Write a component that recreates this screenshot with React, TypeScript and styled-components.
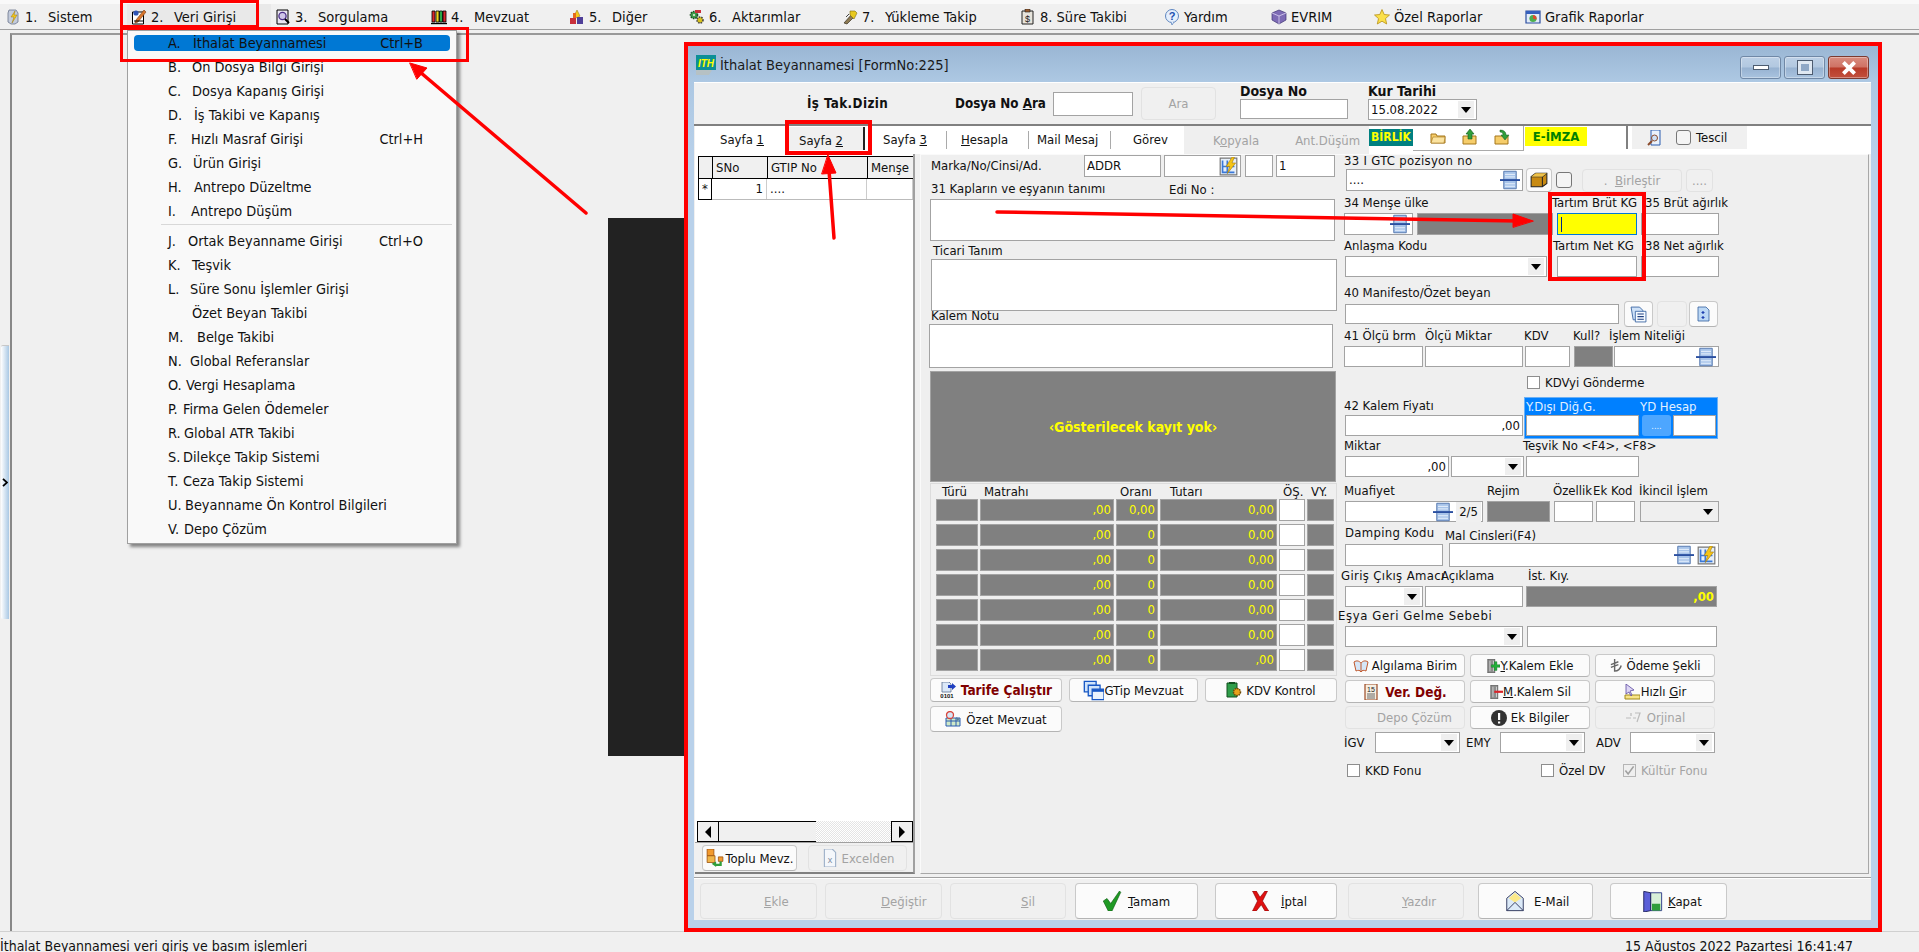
import React from 'react';
import styled, { createGlobalStyle } from 'styled-components';

const GlobalStyle = createGlobalStyle`
  html, body { margin: 0; padding: 0; background: #f0f0f0; }
  body {
    font-family: "DejaVu Sans Condensed", "DejaVu Sans", "Liberation Sans", sans-serif;
    font-size: 13px;
    color: #111;
  }
  u { text-underline-offset: 1px; }
`;

const Page = styled.div`
  position: relative;
  width: 1919px;
  height: 952px;
  overflow: hidden;
  display: flex;
  flex-direction: column;
  background: #f0f0f0;
`;

const TopStrip = styled.div`
  height: 4px;
  background: #f9f9f9;
`;

const MenuBar = styled.div`
  height: 25px;
  display: flex;
  padding-left: 1px;
  background: #f0f0f0;
  border-bottom: 1px solid #a0a0a0;
  margin-bottom: 3px;
  flex: none;
`;

const MenuEntry = styled.div<{ $w: number; $on?: boolean }>`
  width: ${p => p.$w}px;
  flex: none;
  box-sizing: border-box;
  padding-left: 4px;
  display: flex;
  align-items: center;
  gap: 4px;
  font-size: 14.5px;
  white-space: nowrap;
  background: ${p => (p.$on ? '#e9e9e9' : 'transparent')};
`;

const MenuNum = styled.span`
  width: 19px;
  flex: none;
`;

const Desktop = styled.div`
  flex: 1;
  display: flex;
  min-height: 0;
`;

const Handle = styled.div`
  width: 10px;
  flex: none;
  display: flex;
  align-items: center;
`;

const HandleBar = styled.div`
  width: 8px;
  height: 273px;
  margin-left: 1px;
  border-radius: 2px 0 0 2px;
  background: linear-gradient(90deg, #ffffff, #a9c8e4);
  border-top: 1px solid #c8c8c8;
  display: flex;
  align-items: center;
  justify-content: center;
`;

const Mdi = styled.div`
  flex: 1;
  position: relative;
  border-top: 2px solid #999;
  border-left: 2px solid #888;
  background: #f0f0f0;
`;

const DarkPane = styled.div`
  position: absolute;
  left: 596px;
  top: 183px;
  width: 84px;
  height: 538px;
  background: #222;
`;

const StatusBar = styled.div`
  height: 14px;
  flex: none;
  border-top: 1px solid #d0d0d0;
  display: flex;
  justify-content: space-between;
  padding: 6px 66px 0 0;
  font-size: 14px;
  line-height: 16px;
  white-space: nowrap;
`;

const Dropdown = styled.div`
  position: absolute;
  left: 127px;
  top: 30px;
  width: 328px;
  height: 512px;
  border: 1px solid #a0a0a0;
  background: #f9f9f9;
  box-shadow: 3px 3px 3px rgba(0, 0, 0, 0.45);
  font-size: 14.4px;
  z-index: 3;
`;

const DropItem = styled.div<{ $on?: boolean }>`
  position: relative;
  z-index: 0;
  height: 24px;
  margin: 0 6px;
  padding-left: 34px;
  display: flex;
  align-items: center;
  white-space: nowrap;
  ${p =>
    p.$on &&
    `&::before {
      content: '';
      position: absolute;
      inset: 4px 0;
      border-radius: 4px;
      background: #0078d4;
      z-index: -1;
    }`}
`;

const DropKey = styled.span<{ $w: number }>`
  width: ${p => p.$w}px;
  flex: none;
`;

const DropShortcut = styled.span`
  margin-left: auto;
  margin-right: 27px;
`;

const DropSep = styled.div`
  height: 1px;
  margin: 1px 4px 4px 33px;
  background: #d8d8d8;
`;

const Window = styled.div`
  position: absolute;
  left: 676px;
  top: 11px;
  width: 1190px;
  height: 882px;
  box-sizing: border-box;
  padding: 0 7px 8px 6px;
  display: flex;
  flex-direction: column;
  background: linear-gradient(#9ab6d4, #adc8e3 36px, #b9d1ea 120px);
  z-index: 1;
`;

const TitleBar = styled.div`
  height: 37px;
  flex: none;
  display: flex;
  align-items: center;
  gap: 4px;
  padding-left: 2px;
  font-size: 14.5px;
  color: #1a1a1a;
`;

const WinButtons = styled.div`
  margin-left: auto;
  margin-right: 2px;
  display: flex;
  gap: 3px;
  align-self: flex-start;
  padding-top: 10px;
`;

const WinButton = styled.div<{ $close?: boolean }>`
  width: 41px;
  height: 23px;
  box-sizing: border-box;
  border: 1px solid ${p => (p.$close ? '#7c3a30' : '#7088a6')};
  border-radius: 3px;
  display: flex;
  align-items: center;
  justify-content: center;
  background: ${p =>
    p.$close
      ? 'linear-gradient(#d98d80 0, #cf7264 48%, #b83a28 52%, #c2503d 100%)'
      : 'linear-gradient(#bdd0e6 0, #b2c8e0 48%, #97b2d1 52%, #a9c3df 100%)'};
  box-shadow: inset 0 0 0 1px rgba(255, 255, 255, 0.35);
`;

const MinGlyph = styled.div`
  width: 16px;
  height: 5px;
  background: #fff;
  border: 1px solid #4d5c70;
  box-sizing: border-box;
`;

const MaxGlyph = styled.div`
  width: 14px;
  height: 13px;
  box-sizing: border-box;
  background: #8fa8c6;
  border: 3px solid #dfe8f2;
  outline: 1px solid #4d5c70;
`;

const Content = styled.div`
  flex: 1;
  display: flex;
  flex-direction: column;
  background: #f0f0f0;
  min-height: 0;
`;

const HeaderStrip = styled.div`
  height: 41px;
  flex: none;
  display: flex;
  align-items: center;
  border-top: 1px solid #fff;
  border-bottom: 2px solid #808080;
  box-sizing: content-box;
  margin-top: -1px;
`;

const HeadLabel = styled.div<{ $ml?: number; $w: number; $ls?: number }>`
  flex: none;
  width: ${p => p.$w}px;
  margin-left: ${p => p.$ml ?? 0}px;
  letter-spacing: ${p => p.$ls ?? 0}px;
  font-weight: bold;
  font-size: 13.3px;
  white-space: nowrap;
`;

const HeadGroup = styled.div<{ $w: number; $ml?: number }>`
  flex: none;
  width: ${p => p.$w}px;
  margin-left: ${p => p.$ml ?? 0}px;
  align-self: flex-start;
  padding-top: 1px;
  display: flex;
  flex-direction: column;
  line-height: 14px;
  gap: 1px;
  b { font-size: 14px; }
`;

const TabStrip = styled.div`
  height: 28px;
  flex: none;
  display: flex;
  align-items: flex-start;
  margin-left: 1px;
  background: #fff;
`;

const Tab = styled.div<{ $w: number; $pl: number; $on?: boolean; $sep?: boolean }>`
  flex: none;
  width: ${p => p.$w}px;
  height: ${p => (p.$on ? 23 : 18)}px;
  margin-top: ${p => (p.$on ? 1 : 5)}px;
  box-sizing: border-box;
  padding-left: ${p => p.$pl}px;
  line-height: ${p => (p.$on ? 28 : 18)}px;
  white-space: nowrap;
  background: ${p => (p.$on ? '#f0f0f0' : 'transparent')};
  border-right: ${p => (p.$on ? '2px solid #222' : p.$sep ? '1px solid #aaa' : 'none')};
`;

const ToolBlock = styled.div`
  flex: none;
  width: 185px;
  height: 28px;
  display: flex;
  align-items: center;
  padding-left: 29px;
  box-sizing: border-box;
  gap: 36px;
  background: #efefef;
  color: #a3a3a3;
  white-space: nowrap;
`;

const Birlik = styled.div`
  flex: none;
  width: 44px;
  height: 17px;
  margin-top: 3px;
  background: #008080;
  color: #ffff00;
  font-weight: bold;
  font-size: 12px;
  line-height: 17px;
  text-align: center;
`;

const IconTray = styled.div`
  flex: none;
  width: 111px;
  height: 25px;
  box-sizing: border-box;
  border-bottom: 1px solid #aaa;
  border-right: 1px solid #aaa;
  padding: 3px 0 0 17px;
  display: flex;
  align-items: flex-start;
  gap: 16px;
`;

const EImza = styled.div`
  flex: none;
  width: 62px;
  height: 19px;
  margin: 1px 0 0 1px;
  background: #ffff00;
  color: #008000;
  font-weight: bold;
  font-size: 13px;
  line-height: 19px;
  text-align: center;
`;

const TesciBlock = styled.div`
  flex: none;
  margin-left: 39px;
  width: 121px;
  height: 23px;
  box-sizing: border-box;
  border-left: 2px solid #808080;
  background: linear-gradient(90deg, #fff 4px, #f0f0f0 4px);
  display: flex;
  align-items: center;
  padding-left: 19px;
`;

const MainArea = styled.div`
  height: 720px;
  flex: none;
  display: flex;
  margin-left: 1px;
`;

const LeftPanel = styled.div`
  width: 220px;
  flex: none;
  box-sizing: border-box;
  border-right: 2px solid #a0a0a0;
  border-bottom: 2px solid #808080;
  padding-top: 2px;
  background: #fff;
  display: flex;
  flex-direction: column;
`;

const GridHead = styled.div`
  margin-left: 3px;
  display: grid;
  grid-template-columns: 14px 55px 100px 46px;
  height: 23px;
  box-sizing: border-box;
  background: #f0f0f0;
  border-top: 1px solid #000;
  border-bottom: 1px solid #000;
`;

const GridHeadCell = styled.div`
  border-left: 1px solid #000;
  padding-left: 3px;
  line-height: 21px;
  overflow: hidden;
  white-space: nowrap;
`;

const GridRow = styled.div`
  margin-left: 3px;
  display: grid;
  grid-template-columns: 14px 55px 100px 46px;
  height: 21px;
  box-sizing: border-box;
  border-bottom: 1px solid #bbb;
  line-height: 20px;
`;

const GridMark = styled.div`
  border: 1px solid #000;
  border-top: none;
  margin-bottom: -1px;
  text-align: center;
`;

const GridCell = styled.div<{ $right?: boolean }>`
  border-right: 1px solid #ccc;
  padding: 0 3px;
  text-align: ${p => (p.$right ? 'right' : 'left')};
`;

const GridFill = styled.div`
  flex: 1;
`;

const HScroll = styled.div`
  height: 21px;
  flex: none;
  margin-left: 2px;
  display: flex;
  background: repeating-conic-gradient(#e4e4e4 0 25%, #fff 0 50%) 0 0 / 2px 2px;
`;

const ScrollBtn = styled.div`
  width: 22px;
  flex: none;
  box-sizing: border-box;
  border: 1px solid #000;
  background: #f0f0f0;
  display: flex;
  align-items: center;
  justify-content: center;
`;

const ScrollThumb = styled.div`
  width: 97px;
  flex: none;
  box-sizing: border-box;
  background: #f0f0f0;
  border-top: 1px solid #000;
  border-bottom: 1px solid #000;
`;

const ScrollSpace = styled.div`
  flex: 1;
`;

const LeftFooter = styled.div`
  height: 30px;
  flex: none;
  box-sizing: border-box;
  border-top: 1px solid #a0a0a0;
  background: #f0f0f0;
  padding: 2px 0 0 7px;
  display: flex;
  gap: 11px;
`;

const Form = styled.div`
  flex: 1;
  margin-left: 5px;
  margin-right: 2px;
  box-sizing: border-box;
  border: 1px solid;
  border-color: #fafafa #a8a8a8 #a8a8a8 #fafafa;
  padding-left: 8px;
  display: flex;
  background: #efefef;
`;

const FormLeft = styled.div`
  width: 409px;
  flex: none;
  display: flex;
  flex-direction: column;
`;

const FormRight = styled.div`
  flex: 1;
  padding-left: 6px;
  display: flex;
  flex-direction: column;
`;

const FieldRow = styled.div<{ $h: number; $mt?: number }>`
  height: ${p => p.$h}px;
  margin-top: ${p => p.$mt ?? 0}px;
  flex: none;
  display: flex;
  align-items: center;
`;

const LabelRow = styled.div<{ $h: number; $pb?: number }>`
  height: ${p => p.$h}px;
  flex: none;
  box-sizing: border-box;
  padding-bottom: ${p => p.$pb ?? 2}px;
  display: flex;
  align-items: flex-end;
`;

const FieldLabel = styled.span<{ $w?: number; $ml?: number; $lift?: number; $ls?: number }>`
  flex: none;
  ${p => (p.$w ? `width: ${p.$w}px;` : '')}
  margin-left: ${p => p.$ml ?? 0}px;
  margin-bottom: ${p => p.$lift ?? 0}px;
  letter-spacing: ${p => p.$ls ?? 0}px;
  line-height: 16px;
  white-space: nowrap;
`;

const Field = styled.div<{
  $w: number;
  $h?: number;
  $ml?: number;
  $tone?: 'grey' | 'yellow' | 'off';
  $right?: boolean;
}>`
  flex: none;
  width: ${p => p.$w}px;
  height: ${p => p.$h ?? 22}px;
  margin-left: ${p => p.$ml ?? 0}px;
  box-sizing: border-box;
  border: 1px solid ${p => (p.$tone === 'yellow' ? '#0078d7' : '#a3a3a3')};
  background: ${p =>
    p.$tone === 'grey' ? '#808080' : p.$tone === 'yellow' ? '#ffff00' : p.$tone === 'off' ? '#efefef' : '#fff'};
  color: ${p => (p.$tone === 'grey' ? '#ffff00' : '#111')};
  display: flex;
  align-items: center;
  justify-content: ${p => (p.$right ? 'flex-end' : 'flex-start')};
  padding: 0 2px;
  line-height: 16px;
  white-space: nowrap;
`;

const Caret = styled.span`
  margin-left: auto;
  width: 16px;
  height: calc(100% - 2px);
  flex: none;
  background: #efefef;
  display: flex;
  align-items: center;
  justify-content: center;
  &::after {
    content: '';
    border-left: 5px solid transparent;
    border-right: 5px solid transparent;
    border-top: 6px solid #000;
  }
`;

const FieldTools = styled.span`
  margin-left: auto;
  display: flex;
  align-items: center;
  gap: 3px;
`;

const PageCount = styled.span`
  background: #f0f0f0;
  padding: 2px 3px;
  margin-right: -1px;
`;

const Caretline = styled.span`
  width: 1px;
  height: 15px;
  margin-left: 1px;
  background: #00288c;
`;

const GreyBox = styled.div`
  width: 406px;
  height: 111px;
  margin: 3px 0 0 1px;
  flex: none;
  box-sizing: border-box;
  background: #808080;
  border: 1px solid #a3a3a3;
  color: #ffff00;
  font-weight: bold;
  font-size: 14px;
  display: flex;
  align-items: center;
  justify-content: center;
`;

const TaxPanel = styled.div`
  width: 407px;
  height: 193px;
  margin: 1px 0 0 1px;
  flex: none;
  box-sizing: border-box;
  border: 1px solid #dcdcdc;
  padding-left: 5px;
`;

const TaxGrid = styled.div`
  display: grid;
  grid-template-columns: 42px 134px 42px 117px 26px 27px;
  column-gap: 2px;
  grid-auto-rows: 22px;
  row-gap: 3px;
`;

const TaxHead = styled(TaxGrid)`
  grid-auto-rows: 15px;
  line-height: 15px;
`;

const TaxHeadCell = styled.span<{ $pl: number }>`
  padding-left: ${p => p.$pl}px;
  white-space: nowrap;
`;

const TaxCell = styled.div<{ $white?: boolean }>`
  box-sizing: border-box;
  border: 1px solid #a3a3a3;
  background: ${p => (p.$white ? '#fff' : '#808080')};
  color: #ffff00;
  text-align: right;
  padding-right: 2px;
  line-height: 20px;
`;

const Btn = styled.div<{ $w?: number; $h?: number; $ml?: number; $off?: boolean; $pl?: number; $gap?: number }>`
  flex: none;
  ${p => (p.$w ? `width: ${p.$w}px;` : '')}
  height: ${p => p.$h ?? 23}px;
  margin-left: ${p => p.$ml ?? 0}px;
  box-sizing: border-box;
  border: 1px solid ${p => (p.$off ? '#e2e2e2' : '#c9c9c9')};
  border-bottom-color: ${p => (p.$off ? '#e2e2e2' : '#b4b4b4')};
  border-radius: 4px;
  background: ${p => (p.$off ? '#f0f0f0' : '#fbfbfb')};
  color: ${p => (p.$off ? '#a3a3a3' : '#111')};
  display: flex;
  align-items: center;
  justify-content: ${p => (p.$pl != null ? 'flex-start' : 'center')};
  padding-left: ${p => p.$pl ?? 0}px;
  gap: ${p => p.$gap ?? 3}px;
  white-space: nowrap;
`;

const Maroon = styled.b`
  color: #800000;
  font-size: 13.5px;
`;

const ButtonGrid = styled.div`
  margin: 7px 0 0 1px;
  display: grid;
  grid-template-columns: repeat(3, 120px);
  grid-auto-rows: 23px;
  gap: 3px 5px;
`;

const BluePanel = styled.div`
  width: 194px;
  height: 42px;
  margin-left: 1px;
  flex: none;
  box-sizing: border-box;
  background: #0080ff;
  color: #e2f0ff;
  border: 1px solid #6bb0f5;
  padding-left: 1px;
`;

const BlueLabels = styled.div`
  height: 17px;
  display: grid;
  grid-template-columns: 114px auto;
  line-height: 18px;
  white-space: nowrap;
`;

const BlueFields = styled.div`
  display: flex;
  align-items: center;
`;

const BlueBtn = styled.div`
  flex: none;
  width: 29px;
  height: 21px;
  margin: 0 2px 0 3px;
  border-radius: 3px;
  background: #4da6ff;
  color: #e8f3ff;
  font-size: 9px;
  display: flex;
  align-items: center;
  justify-content: center;
`;

const Split = styled.div`
  height: 42px;
  flex: none;
  display: flex;
`;

const SplitLeft = styled.div`
  width: 179px;
  flex: none;
  display: flex;
  flex-direction: column;
`;

const CheckGroup = styled.div<{ $w?: number; $ml?: number; $off?: boolean }>`
  flex: none;
  ${p => (p.$w ? `width: ${p.$w}px;` : '')}
  margin-left: ${p => p.$ml ?? 0}px;
  display: flex;
  align-items: center;
  gap: 5px;
  color: ${p => (p.$off ? '#a3a3a3' : '#111')};
  white-space: nowrap;
`;

const CheckBox = styled.span<{ $off?: boolean }>`
  width: 13px;
  height: 13px;
  flex: none;
  box-sizing: border-box;
  border: 1px solid ${p => (p.$off ? '#b5b5b5' : '#8d8d8d')};
  background: ${p => (p.$off ? '#efefef' : '#fff')};
  display: flex;
  align-items: center;
  justify-content: center;
`;

const RoundCheck = styled.span<{ $w: number; $ml?: number }>`
  flex: none;
  width: ${p => p.$w}px;
  height: ${p => p.$w}px;
  margin-left: ${p => p.$ml ?? 0}px;
  box-sizing: border-box;
  border: 1px solid #777;
  border-radius: 3px;
  background: #f4f4f4;
`;

const BottomSep = styled.div`
  height: 2px;
  flex: none;
  margin-top: 3px;
  border-top: 1px solid #a0a0a0;
  border-bottom: 1px solid #fff;
  box-sizing: border-box;
`;

const BottomBar = styled.div`
  flex: none;
  height: 36px;
  margin-top: 4px;
  display: flex;
`;

const Overlay = styled.svg`
  position: absolute;
  left: 0;
  top: 0;
  z-index: 5;
  pointer-events: none;
`;

const Svg = styled.svg`
  flex: none;
  display: block;
`;

const Ico: React.FC<{ s?: number; children: React.ReactNode }> = ({ s = 16, children }) => (
  <Svg width={s} height={s} viewBox="0 0 16 16">
    {children}
  </Svg>
);

const SistemIcon = () => (
  <Ico>
    <path d="M4 1h7l2 3v9l-3 2H6l-3-2V4z" fill="#c3cbdb" stroke="#69748c" strokeWidth=".8" />
    <path d="M10 2 6 8h3l-2 6 5-8H9z" fill="#f3c81c" stroke="#9c7a10" strokeWidth=".5" />
  </Ico>
);
const PencilDocIcon = () => (
  <Ico>
    <path d="M1.5 3h11v12h-11z" fill="#fff" stroke="#000" />
    <path d="M5 11 13 1l2 2-8 10-3 1z" fill="#d8762c" stroke="#7a3a10" strokeWidth=".6" />
    <circle cx="5" cy="4" r="2.6" fill="#2f55b5" />
    <path d="M3 12h9" stroke="#000" />
  </Ico>
);
const MagnifierDocIcon = () => (
  <Ico>
    <path d="M2 1h11v14H2z" fill="#eae6f2" stroke="#000" />
    <circle cx="7.5" cy="7" r="3.6" fill="#cfc6e8" stroke="#4b2f8a" strokeWidth="1.3" />
    <path d="m10 10 4 4" stroke="#000" strokeWidth="2" />
  </Ico>
);
const BooksIcon = () => (
  <Ico>
    <path d="M1 2h3v11H1z" fill="#d9262c" stroke="#000" strokeWidth=".8" />
    <path d="M5 2h3v11H5z" fill="#f2d51c" stroke="#000" strokeWidth=".8" />
    <path d="M8.5 2h3v11h-3z" fill="#29a84a" stroke="#000" strokeWidth=".8" />
    <path d="M12 2h3v11h-3z" fill="#d9262c" stroke="#000" strokeWidth=".8" />
    <path d="M0 14.5h16" stroke="#000" strokeWidth="1.4" />
  </Ico>
);
const PeopleIcon = () => (
  <Ico>
    <path d="M8 1 11 7 8 9 5 7z" fill="#f4c91a" stroke="#8a6a0c" strokeWidth=".5" />
    <path d="M1 9h6v6H1z" fill="#c8303b" />
    <path d="M8 8h6v7H8z" fill="#4f3f98" />
    <path d="M4 4h3v5H4z" fill="#e56a1d" />
  </Ico>
);
const GearsIcon = () => (
  <Ico>
    <circle cx="5" cy="6" r="3.5" fill="#3f9e4a" stroke="#1f4f25" strokeDasharray="1.5 1" strokeWidth="1.6" />
    <circle cx="11" cy="11" r="3" fill="#d8c21c" stroke="#444" strokeDasharray="1.5 1" strokeWidth="1.6" />
    <path d="M6 1h6v3H6z" fill="#c8303b" />
    <circle cx="5" cy="6" r="1" fill="#eee" />
  </Ico>
);
const WandIcon = () => (
  <Ico>
    <path d="m2 14 8-9 3 2-8 8z" fill="#8d7a52" stroke="#3a3222" strokeWidth=".7" />
    <path d="M8 2h5l2 2-3 6-4-4z" fill="#e8c91e" stroke="#7a6a10" strokeWidth=".6" />
    <path d="m4 8 3-3" stroke="#444" strokeWidth="1" />
  </Ico>
);
const ClipboardIcon = () => (
  <Ico>
    <path d="M2 2h11v13H2z" fill="#e7e4dc" stroke="#222" />
    <path d="M5 0h5v3H5z" fill="#9a5c2e" stroke="#222" strokeWidth=".6" />
    <text x="7.5" y="12.5" fontSize="9" textAnchor="middle" fill="#222" fontFamily="Liberation Sans">$</text>
  </Ico>
);
const QuestionIcon = () => (
  <Ico>
    <circle cx="8" cy="7" r="6.5" fill="#e5effc" stroke="#5e86c0" />
    <path d="m7 13 1 3 2-3" fill="#e5effc" stroke="#5e86c0" strokeWidth=".8" />
    <text x="8" y="11" fontSize="11" fontWeight="bold" textAnchor="middle" fill="#2050b0" fontFamily="Liberation Sans">?</text>
  </Ico>
);
const GemIcon = () => (
  <Ico>
    <path d="M1 4 8 1l7 3v7l-7 4-7-4z" fill="#7d6bb5" stroke="#3f3373" strokeWidth=".7" />
    <path d="M1 4l7 3 7-3M8 7v8" stroke="#ddd6f2" strokeWidth=".8" fill="none" />
  </Ico>
);
const StarIcon = () => (
  <Ico>
    <path d="m8 .5 2.2 5 5.3.5-4 3.6 1.2 5.4L8 12.2 3.300 15l1.2-5.4-4-3.600 5.300-.5z" fill="#fbe04a" stroke="#b79015" strokeWidth=".8" />
  </Ico>
);
const ChartIcon = () => (
  <Ico>
    <path d="M1 2h14v12H1z" fill="#e2ecf8" stroke="#2a4da0" strokeWidth="1.200" />
    <path d="M1 2h14v3H1z" fill="#3560bd" />
    <circle cx="8" cy="9.500" r="3.600" fill="#4bb04f" />
    <path d="M8 9.500V6a3.600 3.600 0 0 1 3.400 4.800z" fill="#e0492f" />
  </Ico>
);
const TitleLogo = () => (
  <Svg width={20} height={20} viewBox="0 0 20 20">
    <path d="M0 0h20v15H0z" fill="#0d8f97" />
    <path d="M0 15h16l-3 5H0z" fill="#b6c1c4" />
    <text x="10" y="12" fontSize="10" fontWeight="bold" fontStyle="italic" textAnchor="middle" fill="#ffff00" fontFamily="Liberation Sans">ITH</text>
  </Svg>
);
const FolderIcon = () => (
  <Ico>
    <path d="M1 5h5l1 2h8v7H1z" fill="#f6cd6a" stroke="#a5761a" />
    <path d="M1 14 3 8h12l-1 6z" fill="#fbe3a0" stroke="#a5761a" strokeWidth=".6" />
  </Ico>
);
const FolderUpIcon = () => (
  <Ico>
    <path d="M1 7h13v8H1z" fill="#f6cd6a" stroke="#a5761a" />
    <path d="M8 0l4 5H10v5H6V5H4z" fill="#2f9e3a" stroke="#12591c" strokeWidth=".6" />
  </Ico>
);
const FolderTurnIcon = () => (
  <Ico>
    <path d="M1 7h13v8H1z" fill="#f6cd6a" stroke="#a5761a" />
    <path d="M6 1c4 0 6 2 6 5h3l-4 5-4-5h2c0-2-1-3-3-3z" fill="#2f9e3a" stroke="#12591c" strokeWidth=".5" />
  </Ico>
);
const DocSearchIcon = () => (
  <Ico>
    <path d="M4 0h9v15H4z" fill="#eaf2fc" stroke="#2a5cb0" />
    <circle cx="7.500" cy="8" r="3" fill="#cfe1f6" stroke="#8a4a2a" />
    <path d="M5 11l-4 4" stroke="#8a4a2a" strokeWidth="2" />
  </Ico>
);
const LookupIcon = () => (
  <Ico s={20}>
    <path d="M3 1h10v14H3z" fill="#a8c4ea" stroke="#4a6fa8" strokeWidth=".7" />
    <path d="M4 3.500h8M4 5.500h8M4 11h8M4 13h8" stroke="#e6f0fb" strokeWidth=".8" />
    <path d="M0 7.300h16v1.500H0z" fill="#2a4fa0" />
  </Ico>
);
const BoltTableIcon = () => (
  <Ico s={19}>
    <path d="M1 1h14v14H1z" fill="#e6eff9" stroke="#777" />
    <path d="M3 3v10h10M7 3v10M3 8h10" stroke="#3a78d8" strokeWidth="1.400" fill="none" />
    <path d="M11 0 6 8h3l-2 6 7-9h-3l2-5z" fill="#f5c518" stroke="#a47a0c" strokeWidth=".5" />
  </Ico>
);
const CubeIcon = () => (
  <Ico s={18}>
    <path d="M1 5 5 2h10v9l-4 3H1z" fill="#c88a12" stroke="#222" strokeWidth=".9" />
    <path d="M1 5h10l4-3M11 5v9" stroke="#222" strokeWidth=".9" fill="none" />
    <path d="M1 5 5 2h10l-4 3z" fill="#efc24a" />
  </Ico>
);
const DocListIcon = () => (
  <Ico s={17}>
    <path d="M1 1h8l3 3v9H3z" fill="#cfe2f8" stroke="#34609f" strokeWidth=".8" />
    <path d="M5 5h10v10H5z" fill="#f7fbff" stroke="#34609f" strokeWidth=".8" />
    <path d="M7 7.500h6M7 10h6M7 12.500h6" stroke="#1f3f80" />
  </Ico>
);
const DocPlusIcon = () => (
  <Ico>
    <path d="M2 1h8l3 3v11H2z" fill="#bcd8f5" stroke="#34609f" strokeWidth=".8" />
    <path d="M7 5v3M5.500 6.500h3M7 10v3M5.500 11.500h3" stroke="#1f3fb0" strokeWidth="1.200" />
  </Ico>
);
const OpenBookIcon = () => (
  <Ico>
    <path d="M1 4c3-2 5-1 7 1 2-2 4-3 7-1l-2 9c-2-1-4-1-5 1-1-2-3-2-5-1z" fill="#d5e6f8" stroke="#c0562a" />
    <path d="M8 5v9" stroke="#c0562a" />
  </Ico>
);
const FileAddIcon = ({ minus }: { minus?: boolean }) => (
  <Ico s={14}>
    <path d="M2 0h8v16H2z" fill="#8d8d8d" stroke="#444" strokeWidth=".7" />
    <path d="M4 2h1v12H4zM8 2h1v12H8z" fill="#d5d5d5" />
    {minus ? (
      <path d="M6 6.500h10v2.500H6z" fill="#d8232a" />
    ) : (
      <path d="M9.500 3h3v3.500H16v3h-3.500V13h-3V9.500H6v-3h3.500z" fill="#22b03a" stroke="#0d5c1c" strokeWidth=".4" />
    )}
  </Ico>
);
const LiraIcon = () => (
  <Ico s={15}>
    <path d="M6 1v13c4 0 6-2 7-6M2 7l8-3M2 10l8-3" fill="none" stroke="#666" strokeWidth="1.500" />
  </Ico>
);
const CalendarIcon = () => (
  <Ico>
    <path d="M2 0h12v16H2z" fill="#f7efe2" stroke="#9c4a24" strokeWidth="1.200" />
    <text x="8" y="8" fontSize="7" textAnchor="middle" fill="#222" fontFamily="Liberation Sans">15</text>
    <path d="M4 10h8M4 12h8M4 14h8" stroke="#666" />
  </Ico>
);
const PointerIcon = () => (
  <Ico>
    <path d="M1 11h15v4H1z" fill="#f8e488" stroke="#a18a1a" />
    <path d="M2 0v10l3-2 2 4 1-1-2-4 4-1z" fill="#ddd6f5" stroke="#5a48a0" strokeWidth=".8" />
  </Ico>
);
const AlertIcon = () => (
  <Ico>
    <circle cx="8" cy="8" r="8" fill="#333" />
    <path d="M7 3h2.200v7H7zM7 11.500h2.200v2H7z" fill="#fff" />
  </Ico>
);
const OrjinalIcon = () => (
  <Ico>
    <path d="M1 8h5M6 3v3M10 3h5l-3 9M8 8h3" fill="none" stroke="#bbb" strokeWidth="1.200" />
  </Ico>
);
const TarifeIcon = () => (
  <Ico>
    <path d="M2 0h7l2 2v8H2z" fill="#dbe8f8" stroke="#5a6f90" strokeWidth=".8" />
    <path d="M8 3h4V1l4 3.500-4 3.500V6H8z" fill="#1f3fc0" />
    <text x="7" y="15.500" fontSize="6" fontWeight="bold" textAnchor="middle" fill="#111" fontFamily="Liberation Sans">0101</text>
  </Ico>
);
const WindowsIcon = () => (
  <Ico s={21}>
    <path d="M1 1h9v8H1z" fill="#cfe3fa" stroke="#1757c4" />
    <path d="M4 4h9v8H4z" fill="#cfe3fa" stroke="#1757c4" />
    <path d="M7 7h9v8H7z" fill="#eaf3fd" stroke="#1757c4" />
    <path d="M7 7h9v2H7z" fill="#1757c4" />
  </Ico>
);
const GreenGearIcon = () => (
  <Ico>
    <path d="M1 1h10v14H1z" fill="#2f9e4a" stroke="#12501f" />
    <path d="M3 0h6v2H3z" fill="#12501f" />
    <circle cx="11" cy="10" r="3.500" fill="#e8a11c" stroke="#6a4a08" strokeDasharray="1.500 .8" strokeWidth="1.500" />
  </Ico>
);
const GridRedIcon = () => (
  <Ico>
    <path d="M1 7h14v8H1z" fill="#cfe9c8" stroke="#2a5cb0" />
    <path d="M1 10h14M6 7v8M11 7v8" stroke="#2a5cb0" />
    <circle cx="5" cy="4" r="3.500" fill="#d5e6f8" stroke="#d8453a" strokeWidth="1.300" />
    <path d="M11 6l4 2-3 2z" fill="#5a7f9a" />
  </Ico>
);
const TopluIcon = () => (
  <Ico s={18}>
    <path d="M1 0h6v6H1z" fill="#f29a2e" stroke="#9a4f0a" strokeWidth=".7" />
    <path d="M1 6h7v6H1z" fill="#f0b64a" stroke="#9a4f0a" strokeWidth=".7" />
    <path d="M11 7h4v4h-4z" fill="#f29a2e" stroke="#9a4f0a" strokeWidth=".7" />
    <path d="M9 16 5 13l4-2v2h3v-2h2v4H9z" fill="#2f9e3a" />
  </Ico>
);
const ExcelIcon = () => (
  <Ico s={18}>
    <path d="M3 0h7l3 3v13H3z" fill="#f4f7fb" stroke="#9db0c8" />
    <text x="8" y="12" fontSize="8" textAnchor="middle" fill="#7a8aa0" fontFamily="Liberation Sans">x</text>
  </Ico>
);
const CheckMark = () => (
  <Ico s={20}>
    <path d="M1 8l3-2 3 4 7-10 1 1-7 15H5z" fill="#1f9a24" stroke="#0f5c14" strokeWidth=".5" />
  </Ico>
);
const CrossMark = () => (
  <Ico s={20}>
    <path d="M2 0h3l3 5 4-5h2l-4 8 5 8h-3l-3-5-4 5H2l4-8z" fill="#e01010" stroke="#800" strokeWidth=".5" />
  </Ico>
);
const EnvelopeIcon = () => (
  <Ico s={22}>
    <path d="M2 6 8 1l6 5v9H2z" fill="#dceaf8" stroke="#333a60" strokeWidth=".7" />
    <path d="M3.500 6 8 2l4.500 4-4.500 3z" fill="#fbe98a" />
    <path d="M2 15l6-6 6 6" fill="none" stroke="#333a60" strokeWidth=".7" />
  </Ico>
);
const DoorIcon = () => (
  <Ico s={22}>
    <path d="M7 2h8v13H7z" fill="#d8f0d8" stroke="#33408a" strokeWidth=".7" />
    <path d="M8 10h6v5H8z" fill="#2f9e3a" />
    <path d="M2 1l5 1v13l-5 1z" fill="#5b5fd8" stroke="#232660" strokeWidth=".7" />
  </Ico>
);
const TickSmall = () => (
  <Ico s={11}>
    <path d="M2 8l4 5 8-11" fill="none" stroke="#a0a0a0" strokeWidth="2.400" />
  </Ico>
);
const ScrollArrow = ({ right }: { right?: boolean }) => (
  <Svg width={6} height={12} viewBox="0 0 6 12">
    <path d={right ? 'M0 0l6 6-6 6z' : 'M6 0 0 6l6 6z'} fill="#000" />
  </Svg>
);
const HandleChevron = () => (
  <Svg width={6} height={9} viewBox="0 0 6 9">
    <path d="M1 .8 5 4.500 1 8.200" fill="none" stroke="#000" strokeWidth="1.800" />
  </Svg>
);

const menuEntries = [
  { w: 126, icon: <SistemIcon />, num: '1.', name: 'Sistem' },
  { w: 144, icon: <PencilDocIcon />, num: '2.', name: 'Veri Girişi', on: true },
  { w: 156, icon: <MagnifierDocIcon />, num: '3.', name: 'Sorgulama' },
  { w: 138, icon: <BooksIcon />, num: '4.', name: 'Mevzuat' },
  { w: 120, icon: <PeopleIcon />, num: '5.', name: 'Diğer' },
  { w: 153, icon: <GearsIcon />, num: '6.', name: 'Aktarımlar' },
  { w: 178, icon: <WandIcon />, num: '7.', name: 'Yükleme Takip' },
  { w: 144, icon: <ClipboardIcon />, name: '8. Süre Takibi' },
  { w: 107, icon: <QuestionIcon />, name: 'Yardım' },
  { w: 103, icon: <GemIcon />, name: 'EVRIM' },
  { w: 151, icon: <StarIcon />, name: 'Özel Raporlar' },
  { w: 150, icon: <ChartIcon />, name: 'Grafik Raporlar' },
];

const dropItems: { k: string; w: number; t: string; sc?: string; on?: boolean; sep?: boolean }[] = [
  { k: 'A.', w: 25, t: 'İthalat Beyannamesi', sc: 'Ctrl+B', on: true },
  { k: 'B.', w: 24, t: 'Ön Dosya Bilgi Girişi' },
  { k: 'C.', w: 24, t: 'Dosya Kapanış Girişi' },
  { k: 'D.', w: 26, t: 'İş Takibi ve Kapanış' },
  { k: 'F.', w: 23, t: 'Hızlı Masraf Girişi', sc: 'Ctrl+H' },
  { k: 'G.', w: 25, t: 'Ürün Girişi' },
  { k: 'H.', w: 26, t: 'Antrepo Düzeltme' },
  { k: 'I.', w: 23, t: 'Antrepo Düşüm', sep: true },
  { k: 'J.', w: 20, t: 'Ortak Beyanname Girişi', sc: 'Ctrl+O' },
  { k: 'K.', w: 24, t: 'Teşvik' },
  { k: 'L.', w: 22, t: 'Süre Sonu İşlemler Girişi' },
  { k: '', w: 24, t: 'Özet Beyan Takibi' },
  { k: 'M.', w: 29, t: 'Belge Takibi' },
  { k: 'N.', w: 22, t: 'Global Referanslar' },
  { k: 'O.', w: 18, t: 'Vergi Hesaplama' },
  { k: 'P.', w: 15, t: 'Firma Gelen Ödemeler' },
  { k: 'R.', w: 16, t: 'Global ATR Takibi' },
  { k: 'S.', w: 15, t: 'Dilekçe Takip Sistemi' },
  { k: 'T.', w: 15, t: 'Ceza Takip Sistemi' },
  { k: 'U.', w: 17, t: 'Beyanname Ön Kontrol Bilgileri' },
  { k: 'V.', w: 16, t: 'Depo Çözüm' },
];

const taxRows = [
  ['0,00', '0,00'],
  ['0', '0,00'],
  ['0', '0,00'],
  ['0', '0,00'],
  ['0', '0,00'],
  ['0', '0,00'],
  ['0', ',00'],
];

const Select: React.FC<{ w: number; ml?: number; h?: number; off?: boolean }> = ({ w, ml, h = 21, off }) => (
  <Field $w={w} $ml={ml} $h={h} $tone={off ? 'off' : undefined}>
    <Caret />
  </Field>
);

const Annotations = () => (
  <Overlay width={1919} height={952} viewBox="0 0 1919 952">
    <g fill="none" stroke="#ff0000">
      <rect x="686" y="44" width="1194" height="886" strokeWidth="4" />
      <rect x="121.500" y="1.500" width="136" height="25" strokeWidth="3" />
      <rect x="121.500" y="28.500" width="346" height="32" strokeWidth="3" />
      <rect x="787" y="122" width="83" height="31" strokeWidth="4" />
      <rect x="1550" y="194" width="94" height="85" strokeWidth="4" />
    </g>
    <g fill="#ff0000" stroke="#ff0000" strokeLinecap="round">
      <path d="M586 213 420 72" strokeWidth="3.500" fill="none" />
      <path d="m410 63 17 5-10 11z" />
      <path d="M834 238 829 170" strokeWidth="3.500" fill="none" />
      <path d="m828 155 8 18-14 1z" />
      <path d="M997 212 1518 221" strokeWidth="3.500" fill="none" />
      <path d="m1533 221-20-7v13z" />
    </g>
  </Overlay>
);

const App: React.FC = () => (
  <Page>
    <GlobalStyle />
    <TopStrip />
    <MenuBar>
      {menuEntries.map(m => (
        <MenuEntry key={m.name} $w={m.w} $on={m.on}>
          {m.icon}
          {m.num ? <MenuNum>{m.num}</MenuNum> : null}
          <span>{m.name}</span>
        </MenuEntry>
      ))}
    </MenuBar>
    <Desktop>
      <Handle>
        <HandleBar><HandleChevron /></HandleBar>
      </Handle>
      <Mdi>
        <DarkPane />
        <Window>
          <TitleBar>
            <TitleLogo />
            <span>İthalat Beyannamesi [FormNo:225]</span>
            <WinButtons>
              <WinButton><MinGlyph /></WinButton>
              <WinButton><MaxGlyph /></WinButton>
              <WinButton $close>
                <Ico s={18}>
                  <path d="M3 3l10 10M13 3 3 13" stroke="#fff" strokeWidth="3.400" />
                </Ico>
              </WinButton>
            </WinButtons>
          </TitleBar>
          <Content>
            <HeaderStrip>
              <HeadLabel $ml={113} $w={148} $ls={0.4}>İş Tak.Dizin</HeadLabel>
              <HeadLabel $w={98}>Dosya No <u>A</u>ra</HeadLabel>
              <Field $w={80} $h={24} />
              <Btn $w={75} $h={33} $ml={8} $off>Ara</Btn>
              <HeadGroup $w={128} $ml={24}>
                <b>Dosya No</b>
                <Field $w={108} $h={20} />
              </HeadGroup>
              <HeadGroup $w={110}>
                <b>Kur Tarihi</b>
                <Field $w={109} $h={21}>
                  15.08.2022
                  <Caret />
                </Field>
              </HeadGroup>
            </HeaderStrip>
            <TabStrip>
              <Tab $w={92} $pl={25}>Sayfa <u>1</u></Tab>
              <Tab $w={78} $pl={12} $on>Sayfa <u>2</u></Tab>
              <Tab $w={82} $pl={18} $sep>Sayfa <u>3</u></Tab>
              <Tab $w={82} $pl={14} $sep><u>H</u>esapla</Tab>
              <Tab $w={82} $pl={8} $sep>Mail Mesaj</Tab>
              <Tab $w={73} $pl={22}>Görev</Tab>
              <ToolBlock>
                <span>K<u>o</u>pyala</span>
                <span>Ant.Düşüm</span>
              </ToolBlock>
              <Birlik>BİRLİK</Birlik>
              <IconTray>
                <FolderIcon />
                <FolderUpIcon />
                <FolderTurnIcon />
              </IconTray>
              <EImza>E-İMZA</EImza>
              <TesciBlock>
                <DocSearchIcon />
                <RoundCheck $w={15} $ml={13} />
                <FieldLabel $ml={5}>Tescil</FieldLabel>
              </TesciBlock>
            </TabStrip>
            <MainArea>
              <LeftPanel>
                <GridHead>
                  <GridHeadCell />
                  <GridHeadCell>SNo</GridHeadCell>
                  <GridHeadCell>GTIP No</GridHeadCell>
                  <GridHeadCell>Menşe</GridHeadCell>
                </GridHead>
                <GridRow>
                  <GridMark>*</GridMark>
                  <GridCell $right>1</GridCell>
                  <GridCell>....</GridCell>
                  <GridCell />
                </GridRow>
                <GridFill />
                <HScroll>
                  <ScrollBtn><ScrollArrow /></ScrollBtn>
                  <ScrollThumb />
                  <ScrollSpace />
                  <ScrollBtn><ScrollArrow right /></ScrollBtn>
                </HScroll>
                <LeftFooter>
                  <Btn $w={95} $h={26} $gap={2}><TopluIcon />Toplu Mevz.</Btn>
                  <Btn $w={99} $h={26} $off><ExcelIcon />Excelden</Btn>
                </LeftFooter>
              </LeftPanel>
              <Form>
                <FormLeft>
                  <FieldRow $h={22}>
                    <FieldLabel $w={153} $ml={2}>Marka/No/Cinsi/Ad.</FieldLabel>
                    <Field $w={77}>ADDR</Field>
                    <Field $w={77} $ml={3}>
                      <FieldTools><BoltTableIcon /></FieldTools>
                    </Field>
                    <Field $w={28} $ml={4} />
                    <Field $w={59} $ml={3}>1</Field>
                  </FieldRow>
                  <LabelRow $h={22}>
                    <FieldLabel $w={238} $ml={2}>31 Kapların ve eşyanın tanımı</FieldLabel>
                    <FieldLabel $lift={-1}>Edi No :</FieldLabel>
                  </LabelRow>
                  <Field $w={405} $h={42} $ml={1} />
                  <LabelRow $h={18} $pb={0}>
                    <FieldLabel $ml={4}>Ticari Tanım</FieldLabel>
                  </LabelRow>
                  <Field $w={406} $h={52} $ml={2} />
                  <LabelRow $h={13} $pb={0}>
                    <FieldLabel $ml={2}>Kalem Notu</FieldLabel>
                  </LabelRow>
                  <Field $w={404} $h={44} />
                  <GreyBox>‹Gösterilecek kayıt yok›</GreyBox>
                  <TaxPanel>
                    <TaxHead>
                      <TaxHeadCell $pl={6}>Türü</TaxHeadCell>
                      <TaxHeadCell $pl={4}>Matrahı</TaxHeadCell>
                      <TaxHeadCell $pl={4}>Oranı</TaxHeadCell>
                      <TaxHeadCell $pl={10}>Tutarı</TaxHeadCell>
                      <TaxHeadCell $pl={4}>ÖŞ.</TaxHeadCell>
                      <TaxHeadCell $pl={4}>VY.</TaxHeadCell>
                    </TaxHead>
                    <TaxGrid>
                      {taxRows.map((r, i) => (
                        <React.Fragment key={i}>
                          <TaxCell />
                          <TaxCell>,00</TaxCell>
                          <TaxCell>{r[0]}</TaxCell>
                          <TaxCell>{r[1]}</TaxCell>
                          <TaxCell $white />
                          <TaxCell />
                        </React.Fragment>
                      ))}
                    </TaxGrid>
                  </TaxPanel>
                  <FieldRow $h={24} $mt={2}>
                    <Btn $w={132} $h={24} $ml={1} $gap={5}><TarifeIcon /><Maroon>Tarife Çalıştır</Maroon></Btn>
                    <Btn $w={129} $h={24} $ml={7} $gap={0}><WindowsIcon />GTip Mevzuat</Btn>
                    <Btn $w={132} $h={24} $ml={7} $gap={4}><GreenGearIcon />KDV Kontrol</Btn>
                  </FieldRow>
                  <FieldRow $h={26} $mt={4}>
                    <Btn $w={132} $h={26} $ml={1} $gap={5}><GridRedIcon />Özet Mevzuat</Btn>
                  </FieldRow>
                </FormLeft>
                <FormRight>
                  <LabelRow $h={14} $pb={0}>
                    <FieldLabel $ls={0.3}>33 I GTC pozisyon no</FieldLabel>
                  </LabelRow>
                  <FieldRow $h={22}>
                    <Field $w={177} $ml={2}>
                      ....
                      <FieldTools><LookupIcon /></FieldTools>
                    </Field>
                    <Btn $w={26} $h={24} $ml={3}><CubeIcon /></Btn>
                    <RoundCheck $w={16} $ml={4} />
                    <Btn $w={100} $ml={10} $off><span>. &nbsp;<u>B</u>irleştir</span></Btn>
                    <Btn $w={27} $ml={4} $off>....</Btn>
                  </FieldRow>
                  <LabelRow $h={22}>
                    <FieldLabel $w={208}>34 Menşe ülke</FieldLabel>
                    <FieldLabel $w={93}>Tartım Brüt KG</FieldLabel>
                    <FieldLabel>35 Brüt ağırlık</FieldLabel>
                  </LabelRow>
                  <FieldRow $h={22}>
                    <Field $w={69}>
                      <FieldTools><LookupIcon /></FieldTools>
                    </Field>
                    <Field $w={136} $ml={4} $tone="grey" />
                    <Field $w={80} $ml={4} $tone="yellow"><Caretline /></Field>
                    <Field $w={78} $ml={4} />
                  </FieldRow>
                  <LabelRow $h={21}>
                    <FieldLabel $w={209}>Anlaşma Kodu</FieldLabel>
                    <FieldLabel $w={92}>Tartım Net KG</FieldLabel>
                    <FieldLabel>38 Net ağırlık</FieldLabel>
                  </LabelRow>
                  <FieldRow $h={21}>
                    <Select w={202} ml={1} />
                    <Field $w={80} $h={21} $ml={10} />
                    <Field $w={78} $h={21} $ml={4} />
                  </FieldRow>
                  <LabelRow $h={24} $pb={0}>
                    <FieldLabel>40 Manifesto/Özet beyan</FieldLabel>
                  </LabelRow>
                  <FieldRow $h={26}>
                    <Field $w={274} $h={20} $ml={1} />
                    <Btn $w={29} $h={26} $ml={5}><DocListIcon /></Btn>
                    <Btn $w={30} $h={26} $ml={4} $off />
                    <Btn $w={29} $h={26} $ml={2}><DocPlusIcon /></Btn>
                  </FieldRow>
                  <LabelRow $h={19}>
                    <FieldLabel $w={81}>41 Ölçü brm</FieldLabel>
                    <FieldLabel $w={99}>Ölçü Miktar</FieldLabel>
                    <FieldLabel $w={49}>KDV</FieldLabel>
                    <FieldLabel $w={36}>Kull?</FieldLabel>
                    <FieldLabel>İşlem Niteliği</FieldLabel>
                  </LabelRow>
                  <FieldRow $h={21}>
                    <Field $w={79} $h={21} />
                    <Field $w={98} $h={21} $ml={2} />
                    <Field $w={45} $h={21} $ml={2} />
                    <Field $w={39} $h={21} $ml={4} $tone="grey" />
                    <Field $w={105} $h={21} $ml={1}>
                      <FieldTools><LookupIcon /></FieldTools>
                    </Field>
                  </FieldRow>
                  <FieldRow $h={30}>
                    <CheckGroup $ml={183}>
                      <CheckBox />
                      KDVyi Gönderme
                    </CheckGroup>
                  </FieldRow>
                  <Split>
                    <SplitLeft>
                      <LabelRow $h={18} $pb={1}>
                        <FieldLabel>42 Kalem Fiyatı</FieldLabel>
                      </LabelRow>
                      <Field $w={178} $h={21} $ml={1} $right>,00</Field>
                    </SplitLeft>
                    <BluePanel>
                      <BlueLabels>
                        <span>Y.Dışı Diğ.G.</span>
                        <span>YD Hesap</span>
                      </BlueLabels>
                      <BlueFields>
                        <Field $w={113} $h={21} />
                        <BlueBtn>....</BlueBtn>
                        <Field $w={43} $h={21} />
                      </BlueFields>
                    </BluePanel>
                  </Split>
                  <LabelRow $h={17}>
                    <FieldLabel $w={179}>Miktar</FieldLabel>
                    <FieldLabel>Teşvik No &lt;F4&gt;, &lt;F8&gt;</FieldLabel>
                  </LabelRow>
                  <FieldRow $h={21}>
                    <Field $w={104} $h={21} $ml={1} $right>,00</Field>
                    <Select w={73} ml={2} />
                    <Field $w={113} $h={21} $ml={2} />
                  </FieldRow>
                  <LabelRow $h={24}>
                    <FieldLabel $w={143}>Muafiyet</FieldLabel>
                    <FieldLabel $w={66}>Rejim</FieldLabel>
                    <FieldLabel $w={40}>Özellik</FieldLabel>
                    <FieldLabel $w={46}>Ek Kod</FieldLabel>
                    <FieldLabel>İkincil İşlem</FieldLabel>
                  </LabelRow>
                  <FieldRow $h={21}>
                    <Field $w={138} $h={21} $ml={1}>
                      <FieldTools>
                        <LookupIcon />
                        <PageCount>2/5</PageCount>
                      </FieldTools>
                    </Field>
                    <Field $w={63} $h={21} $ml={4} $tone="grey" />
                    <Field $w={39} $h={21} $ml={4} />
                    <Field $w={39} $h={21} $ml={3} />
                    <Select w={79} ml={5} off />
                  </FieldRow>
                  <LabelRow $h={21}>
                    <FieldLabel $w={100} $ml={1} $ls={0.3}>Damping Kodu</FieldLabel>
                    <FieldLabel $lift={-3}>Mal Cinsleri(F4)</FieldLabel>
                  </LabelRow>
                  <FieldRow $h={24}>
                    <Field $w={98} $ml={1} />
                    <Field $w={270} $h={24} $ml={6}>
                      <FieldTools>
                        <LookupIcon />
                        <BoltTableIcon />
                      </FieldTools>
                    </Field>
                  </FieldRow>
                  <LabelRow $h={19}>
                    <FieldLabel $w={100} $ml={-3} $ls={0.35}>Giriş Çıkış Amacı</FieldLabel>
                    <FieldLabel $w={87}>Açıklama</FieldLabel>
                    <FieldLabel>İst. Kıy.</FieldLabel>
                  </LabelRow>
                  <FieldRow $h={21}>
                    <Select w={78} ml={1} />
                    <Field $w={98} $h={21} $ml={2} />
                    <Field $w={191} $h={21} $ml={3} $tone="grey" $right><b>,00</b></Field>
                  </FieldRow>
                  <LabelRow $h={19}>
                    <FieldLabel $ml={-6} $ls={0.6}>Eşya Geri Gelme Sebebi</FieldLabel>
                  </LabelRow>
                  <FieldRow $h={21}>
                    <Select w={178} ml={1} />
                    <Field $w={190} $h={21} $ml={4} />
                  </FieldRow>
                  <ButtonGrid>
                    <Btn><OpenBookIcon />Algılama Birim</Btn>
                    <Btn $gap={0}><FileAddIcon /><span><u>Y</u>.Kalem Ekle</span></Btn>
                    <Btn $gap={2}><LiraIcon />Ödeme Şekli</Btn>
                    <Btn $gap={6}><CalendarIcon /><Maroon>Ver. Değ.</Maroon></Btn>
                    <Btn $gap={0}><FileAddIcon minus /><span><u>M</u>.Kalem Sil</span></Btn>
                    <Btn $gap={1}><PointerIcon /><span>Hızlı <u>G</u>ir</span></Btn>
                    <Btn $off $pl={31}>Depo Çözüm</Btn>
                    <Btn $gap={4}><AlertIcon />Ek Bilgiler</Btn>
                    <Btn $off $gap={6}><OrjinalIcon />Orjinal</Btn>
                  </ButtonGrid>
                  <FieldRow $h={21} $mt={3}>
                    <FieldLabel $w={31}>İGV</FieldLabel>
                    <Select w={85} />
                    <FieldLabel $w={34} $ml={6}>EMY</FieldLabel>
                    <Select w={85} />
                    <FieldLabel $w={34} $ml={11}>ADV</FieldLabel>
                    <Select w={85} />
                  </FieldRow>
                  <FieldRow $h={18} $mt={8}>
                    <CheckGroup $w={194} $ml={3}>
                      <CheckBox />
                      KKD Fonu
                    </CheckGroup>
                    <CheckGroup $w={82}>
                      <CheckBox />
                      Özel DV
                    </CheckGroup>
                    <CheckGroup $off>
                      <CheckBox $off><TickSmall /></CheckBox>
                      Kültür Fonu
                    </CheckGroup>
                  </FieldRow>
                </FormRight>
              </Form>
            </MainArea>
            <BottomSep />
            <BottomBar>
              <Btn $w={117} $h={36} $ml={6} $off $pl={63}><span><u>E</u>kle</span></Btn>
              <Btn $w={117} $h={36} $ml={8} $off $pl={55}><span><u>D</u>eğiştir</span></Btn>
              <Btn $w={116} $h={36} $ml={8} $off $pl={70}><span><u>S</u>il</span></Btn>
              <Btn $w={123} $h={36} $ml={9} $pl={26} $gap={6}><CheckMark /><span><u>T</u>amam</span></Btn>
              <Btn $w={122} $h={36} $ml={17} $pl={34} $gap={11}><CrossMark /><span><u>İ</u>ptal</span></Btn>
              <Btn $w={116} $h={36} $ml={11} $off $pl={53}><span><u>Y</u>azdır</span></Btn>
              <Btn $w={115} $h={36} $ml={14} $pl={25} $gap={8}><EnvelopeIcon /><span>E-Mail</span></Btn>
              <Btn $w={117} $h={36} $ml={17} $pl={30} $gap={5}><DoorIcon /><span><u>K</u>apat</span></Btn>
            </BottomBar>
          </Content>
        </Window>
      </Mdi>
    </Desktop>
    <StatusBar>
      <span>İthalat Beyannamesi veri giriş ve basım işlemleri</span>
      <span>15 Ağustos 2022 Pazartesi 16:41:47</span>
    </StatusBar>
    <Dropdown>
      {dropItems.map(d => (
        <React.Fragment key={d.t}>
          <DropItem $on={d.on}>
            <DropKey $w={d.w}>{d.k}</DropKey>
            {d.t}
            {d.sc ? <DropShortcut>{d.sc}</DropShortcut> : null}
          </DropItem>
          {d.sep ? <DropSep /> : null}
        </React.Fragment>
      ))}
    </Dropdown>
    <Annotations />
  </Page>
);

export default App;
